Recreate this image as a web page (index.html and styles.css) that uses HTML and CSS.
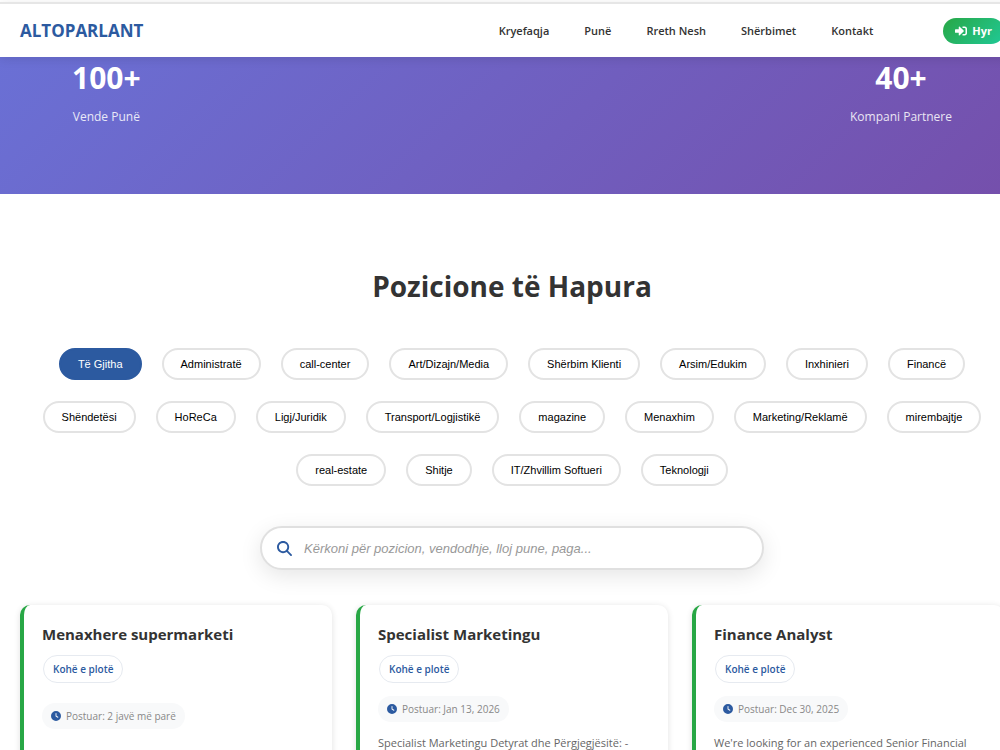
FILE: index.html
```html
<!DOCTYPE html>
<html lang="sq">
<head>
  <meta charset="UTF-8">
  <meta name="viewport" content="width=device-width, initial-scale=1.0">
  <title>Altoparlant - Pozicione të Hapura</title>
  <link rel="stylesheet" href="styles.css">
</head>
<body>
  <header class="navbar">
    <a href="#" class="logo">ALTOPARLANT</a>
    <nav class="nav-links">
      <a href="#">Kryefaqja</a>
      <a href="#">Punë</a>
      <a href="#">Rreth Nesh</a>
      <a href="#">Shërbimet</a>
      <a href="#">Kontakt</a>
    </nav>
    <button type="button" class="login-btn">
      <svg viewBox="0 0 512 512" aria-hidden="true"><path d="M416 448h-84c-6.600 0-12-5.400-12-12v-40c0-6.600 5.400-12 12-12h84c17.700 0 32-14.300 32-32V160c0-17.700-14.300-32-32-32h-84c-6.600 0-12-5.400-12-12V76c0-6.600 5.400-12 12-12h84c53 0 96 43 96 96v192c0 53-43 96-96 96zm-47-209L201 71c-15-15-41-4.500-41 17v96H24c-13.300 0-24 10.700-24 24v96c0 13.300 10.700 24 24 24h136v96c0 21.500 26 32 41 17l168-168c9.300-9.400 9.300-24.600 0-34z"/></svg>
      Hyr
    </button>
  </header>

  <section class="hero">
    <div class="stat">
      <h3>100+</h3>
      <p>Vende Punë</p>
    </div>
    <div class="stat">
      <h3>40+</h3>
      <p>Kompani Partnere</p>
    </div>
  </section>

  <main class="jobs">
    <h2>Pozicione të Hapura</h2>

    <div class="filters">
      <button type="button" class="filter-btn active">Të Gjitha</button>
      <button type="button" class="filter-btn">Administratë</button>
      <button type="button" class="filter-btn">call-center</button>
      <button type="button" class="filter-btn">Art/Dizajn/Media</button>
      <button type="button" class="filter-btn">Shërbim Klienti</button>
      <button type="button" class="filter-btn">Arsim/Edukim</button>
      <button type="button" class="filter-btn">Inxhinieri</button>
      <button type="button" class="filter-btn">Financë</button>
      <button type="button" class="filter-btn">Shëndetësi</button>
      <button type="button" class="filter-btn">HoReCa</button>
      <button type="button" class="filter-btn">Ligj/Juridik</button>
      <button type="button" class="filter-btn">Transport/Logjistikë</button>
      <button type="button" class="filter-btn">magazine</button>
      <button type="button" class="filter-btn">Menaxhim</button>
      <button type="button" class="filter-btn">Marketing/Reklamë</button>
      <button type="button" class="filter-btn">mirembajtje</button>
      <button type="button" class="filter-btn">real-estate</button>
      <button type="button" class="filter-btn">Shitje</button>
      <button type="button" class="filter-btn">IT/Zhvillim Softueri</button>
      <button type="button" class="filter-btn">Teknologji</button>
    </div>

    <label class="search">
      <svg viewBox="0 0 512 512" aria-hidden="true"><path d="M416 208c0 45.900-14.900 88.300-40 122.700L502.600 457.400c12.500 12.500 12.500 32.800 0 45.300s-32.800 12.500-45.300 0L330.700 376c-34.400 25.200-76.800 40-122.700 40C93.100 416 0 322.900 0 208S93.100 0 208 0s208 93.100 208 208zM208 352a144 144 0 1 0 0-288 144 144 0 1 0 0 288z"/></svg>
      <input type="text" aria-label="Kërko" placeholder="Kërkoni për pozicion, vendodhje, lloj pune, paga...">
    </label>

    <div class="job-grid">
      <article class="job-card no-summary">
        <h3>Menaxhere supermarketi</h3>
        <span class="job-type">Kohë e plotë</span>
        <div class="job-date">
          <svg viewBox="0 0 512 512" aria-hidden="true"><path d="M256 0a256 256 0 1 1 0 512A256 256 0 1 1 256 0zM232 120v136c0 8 4 15.500 10.700 20l96 64c11 7.400 25.900 4.400 33.300-6.700s4.400-25.900-6.700-33.300L280 243.200V120c0-13.300-10.700-24-24-24s-24 10.700-24 24z"/></svg>
          Postuar: 2 javë më parë
        </div>
      </article>
      <article class="job-card">
        <h3>Specialist Marketingu</h3>
        <span class="job-type">Kohë e plotë</span>
        <div class="job-date">
          <svg viewBox="0 0 512 512" aria-hidden="true"><path d="M256 0a256 256 0 1 1 0 512A256 256 0 1 1 256 0zM232 120v136c0 8 4 15.500 10.700 20l96 64c11 7.400 25.900 4.400 33.300-6.700s4.400-25.900-6.700-33.300L280 243.200V120c0-13.300-10.700-24-24-24s-24 10.700-24 24z"/></svg>
          Postuar: Jan 13, 2026
        </div>
        <p>Specialist Marketingu Detyrat dhe Përgjegjësitë: -</p>
      </article>
      <article class="job-card">
        <h3>Finance Analyst</h3>
        <span class="job-type">Kohë e plotë</span>
        <div class="job-date">
          <svg viewBox="0 0 512 512" aria-hidden="true"><path d="M256 0a256 256 0 1 1 0 512A256 256 0 1 1 256 0zM232 120v136c0 8 4 15.500 10.700 20l96 64c11 7.400 25.900 4.400 33.300-6.700s4.400-25.900-6.700-33.300L280 243.200V120c0-13.300-10.700-24-24-24s-24 10.700-24 24z"/></svg>
          Postuar: Dec 30, 2025
        </div>
        <p>We're looking for an experienced Senior Financial</p>
      </article>
    </div>
  </main>
</body>
</html>
```

FILE: styles.css
```css
* {
  margin: 0;
  padding: 0;
  box-sizing: border-box;
}
html {
  overflow-x: hidden;
}
body {
  min-width: 1024px;
  padding-top: 2px;
  font-family: "Segoe UI", "Open Sans", "Noto Sans", sans-serif;
  color: #333;
  background: #fff;
}
a {
  text-decoration: none;
}
button {
  cursor: pointer;
}

/* Navbar */
.navbar {
  position: relative;
  z-index: 10;
  display: flex;
  align-items: center;
  height: 55px;
  padding: 0 20px;
  background: #fff;
  border-top: 2px solid #e6e6e6;
  box-shadow: 0 2px 10px rgba(0, 0, 0, 0.1);
}
.logo {
  font-size: 17px;
  font-weight: 700;
  color: #2c5aa0;
}
.nav-links {
  display: flex;
  gap: 35px;
  margin-left: auto;
}
.nav-links a {
  font-size: 11px;
  font-weight: 600;
  color: #333;
}
.login-btn {
  display: flex;
  align-items: center;
  gap: 5px;
  height: 26px;
  margin-left: 70px;
  padding: 0 12px;
  border: none;
  border-radius: 13px;
  background: linear-gradient(135deg, #28a745, #20c997);
  color: #fff;
  font-family: inherit;
  font-size: 11px;
  font-weight: 700;
}
.login-btn svg {
  width: 12px;
  height: 12px;
  fill: currentColor;
}

/* Hero stats */
.hero {
  display: flex;
  justify-content: space-between;
  padding: 0 72px 66px;
  background: linear-gradient(135deg, #6a70d5, #754fab);
  color: #fff;
  text-align: center;
}
.stat h3 {
  font-size: 30px;
  line-height: 41px;
}
.stat p {
  margin-top: 8px;
  font-size: 12px;
  line-height: 22px;
  opacity: 0.85;
}

/* Jobs */
.jobs {
  padding: 70px 20px;
}
.jobs h2 {
  margin-bottom: 40px;
  font-size: 28px;
  line-height: 44px;
  text-align: center;
}
.filters {
  display: flex;
  flex-wrap: wrap;
  justify-content: center;
  gap: 21px 20px;
  margin-bottom: 40px;
}
.filter-btn {
  height: 32px;
  padding: 0 17px;
  border: 2px solid #e3e3e3;
  border-radius: 16px;
  background: #fff;
  color: #000;
  font-family: Arial, "Liberation Sans", sans-serif;
  font-size: 11px;
  font-weight: 500;
}
.filter-btn.active {
  background: #2c5aa0;
  border-color: #2c5aa0;
  color: #fff;
}
.search {
  display: flex;
  align-items: center;
  gap: 12px;
  max-width: 504px;
  height: 44px;
  margin: 0 auto 35px;
  padding: 0 15px;
  border: 2px solid #e0e0e0;
  border-radius: 22px;
  background: #fff;
  box-shadow: 0 6px 22px rgba(0, 0, 0, 0.1);
}
.search svg {
  width: 15px;
  height: 15px;
  fill: #2c5aa0;
}
.search input {
  flex: 1;
  border: none;
  outline: none;
  background: none;
  font-family: Arial, "Liberation Sans", sans-serif;
  font-size: 13px;
}
.search input::placeholder {
  color: #999;
  font-style: italic;
}

/* Job cards */
.job-grid {
  display: grid;
  grid-template-columns: repeat(3, 1fr);
  gap: 24px;
}
.job-card {
  min-height: 200px;
  padding: 17px 18px;
  border-left: 4px solid #28a745;
  border-radius: 10px;
  background: #fff;
  box-shadow: 0 1px 6px rgba(0, 0, 0, 0.12);
}
.job-card h3 {
  margin-bottom: 9px;
  font-size: 15px;
  line-height: 24px;
}
.job-type {
  display: block;
  width: fit-content;
  margin: 0 0 13px 1px;
  padding: 0 9px;
  border: 1px solid #e6eaf0;
  border-radius: 14px;
  color: #2c5aa0;
  font-size: 10px;
  font-weight: 600;
  line-height: 26px;
}
.job-date {
  display: flex;
  align-items: center;
  gap: 5px;
  width: fit-content;
  margin-bottom: 10px;
  padding: 0 9px;
  border-radius: 13px;
  background: #f8f9fa;
  color: #888;
  font-size: 10px;
  line-height: 26px;
}
.job-date svg {
  width: 10px;
  height: 10px;
  fill: #2c5aa0;
}
.job-card.no-summary .job-date {
  margin-top: 20px;
}
.job-card p {
  color: #666;
  font-size: 11px;
  line-height: 22px;
}
```
